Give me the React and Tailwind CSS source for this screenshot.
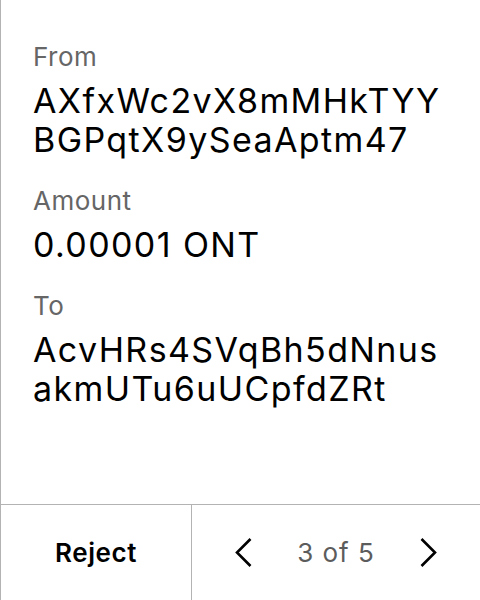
import React from "react";

const Field = ({ label, lines }) => (
  <div>
    <div className="text-[26px] leading-[30px] tracking-[0.5px] text-[#666666] mb-[9px]">{label}</div>
    {lines.map((l) => (
      <div key={l} className="text-[34px] leading-[39px] tracking-[1.4px] text-black">
        {l}
      </div>
    ))}
  </div>
);

const App = () => {
  return (
    <div
      className="w-[480px] h-[600px] bg-white flex flex-col border-l border-[#b3b3b3]"
      style={{ fontFamily: "Inter, 'Noto Sans', sans-serif" }}
    >
      {/* Transaction details */}
      <div className="flex-1 pl-[32px] pt-[42px] flex flex-col gap-[27px]">
        <Field label="From" lines={["AXfxWc2vX8mMHkTYY", "BGPqtX9ySeaAptm47"]} />
        <Field label="Amount" lines={["0.00001 ONT"]} />
        <Field label="To" lines={["AcvHRs4SVqBh5dNnus", "akmUTu6uUCpfdZRt"]} />
      </div>

      {/* Bottom bar */}
      <div className="h-[96px] flex border-t border-[#b3b3b3]">
        <button className="w-[191px] border-r border-[#b3b3b3] flex items-center justify-center text-[26px] tracking-[0.6px] font-semibold text-black">
          Reject
        </button>
        <div className="flex-1 flex items-center justify-between pl-[42px] pr-[42px]">
          <svg width="19" height="31" viewBox="0 0 19 31" fill="none">
            <path d="M16.5 2 L3 15.5 L16.5 29" stroke="black" strokeWidth="2.6" />
          </svg>
          <span className="text-[26px] tracking-[1px] text-[#5c5c5c]">3 of 5</span>
          <svg width="19" height="31" viewBox="0 0 19 31" fill="none">
            <path d="M2.5 2 L16 15.5 L2.5 29" stroke="black" strokeWidth="2.6" />
          </svg>
        </div>
      </div>
    </div>
  );
};

export default App;
